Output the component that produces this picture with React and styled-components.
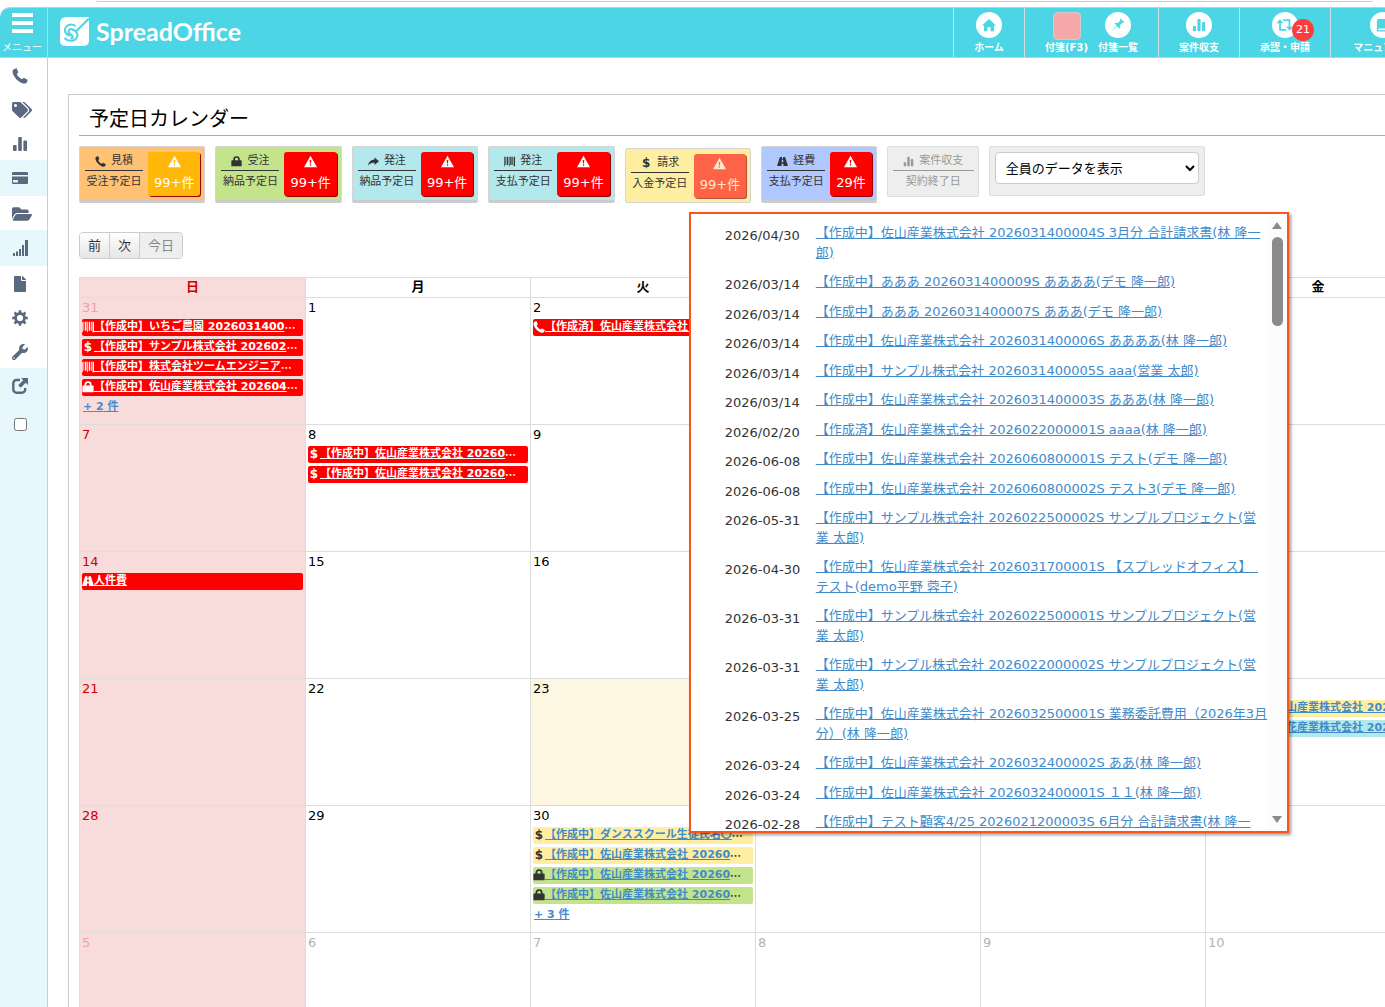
import { useState } from "react";
import styled, { createGlobalStyle, css } from "styled-components";
import { FaTags, FaFolderOpen, FaFile, FaWrench } from "react-icons/fa";

const FONT = `"DejaVu Sans", "Noto Sans CJK JP", sans-serif`;

/* ---------- icons ---------- */

const Phone = () => (
  <svg viewBox="0 0 16 16" width="1em" height="1em" fill="currentColor">
    <path d="M1.800 1.200L3.800.4c.5-.1.800 0 1 .4l1.400 3.100c.1.400 0 .7-.3 1L4.800 6C5.800 8.300 7.600 10.200 10 11.300l1.200-1.100c.3-.3.600-.3 1-.2l3 1.500c.400.2.500.500.4 1l-.8 1.900c-.7 1.300-2.600 1.500-4.500.8C6 13.600 2 9.400.8 5.200.3 3.300.7 1.800 1.800 1.200z" />
  </svg>
);

const Share = () => (
  <svg viewBox="0 0 16 16" width="1em" height="1em" fill="currentColor">
    <path d="M9.500 2L16 7.500 9.500 13V9.800C5.500 9.500 2.500 10.500 0 14 .8 8.500 4 5.500 9.500 5.200z" />
  </svg>
);

const Road = () => (
  <svg viewBox="0 0 16 16" width="1em" height="1em" fill="currentColor">
    <path d="M4.200 1.500h3V4h1.600V1.500h3L16 14.500H9.300v-3.300H6.700v3.300H0zM7 5.500L6.800 9h2.400L9 5.500z" fillRule="evenodd" />
  </svg>
);

const Stats = () => (
  <svg viewBox="0 0 16 16" width="1em" height="1em" fill="currentColor">
    <rect x="1" y="9" width="3.600" height="6" rx="1" />
    <rect x="6.200" y="1" width="3.600" height="14" rx="1" />
    <rect x="11.400" y="4.500" width="3.600" height="10.500" rx="1" />
  </svg>
);

const Card = () => (
  <svg viewBox="0 0 16 16" width="1em" height="1em" fill="currentColor">
    <path d="M0 3a1 1 0 0 1 1-1h14a1 1 0 0 1 1 1v2H0zM0 6.500h16V13a1 1 0 0 1-1 1H1a1 1 0 0 1-1-1zM1 10v2.500h5V10z" fillRule="evenodd" />
  </svg>
);

const Signal = () => (
  <svg viewBox="0 0 16 16" width="1em" height="1em" fill="currentColor">
    <path d="M1 13h2v3H1zM4 11.500h2V16H4zM7 9h2v7H7zM10 5h2v11h-2zM13 0h3v16h-3z" />
  </svg>
);

const Cog = () => (
  <svg viewBox="0 0 16 16" width="1em" height="1em" fill="none" stroke="currentColor">
    <circle cx="8" cy="8" r="4.500" strokeWidth="2.800" />
    <path
      d="M8 .2v2.800M8 13v2.800M.2 8h2.800M13 8h2.800M2.500 2.500l1.900 1.900M11.600 11.600l1.900 1.900M2.500 13.500l1.900-1.900M11.600 4.400l1.900-1.900"
      strokeWidth="2.600"
    />
  </svg>
);

const Export = () => (
  <svg viewBox="0 0 16 16" width="1em" height="1em">
    <path
      d="M8 2H4.500A3.200 3.200 0 0 0 1.300 5.200v6.300a3.200 3.200 0 0 0 3.200 3.200h5.500a3.200 3.200 0 0 0 3.200-3.200V10"
      fill="none"
      stroke="currentColor"
      strokeWidth="2.400"
    />
    <path d="M9 0h7v7l-2.300-2.300-5 5-2.500-2.500 5-5z" fill="currentColor" />
  </svg>
);

const Lock = () => (
  <svg viewBox="0 0 16 16" width="1em" height="1em">
    <path d="M4.500 8V4.500a3 3 0 0 1 3-3h1a3 3 0 0 1 3 3V8" fill="none" stroke="currentColor" strokeWidth="2.400" />
    <path d="M1.500 6h13a1 1 0 0 1 1 1v8H.5V7a1 1 0 0 1 1-1z" fill="currentColor" />
  </svg>
);

const Barcode = () => (
  <svg viewBox="0 0 16 16" width="1em" height="1em" fill="currentColor">
    <path d="M0 1h1v14H0zM2 1h1v12H2zM4 1h2v12H4zM7 1h1v14H7zM9 1h2v12H9zM12 1h1v12h-1zM14 1h2v14h-2z" />
  </svg>
);

const Warning = () => (
  <svg viewBox="0 0 16 16" width="1em" height="1em" fill="currentColor">
    <path d="M8 1l8 14H0zM7 6l.4 4.500h1.200L9 6zM7.200 11.500v1.600h1.600v-1.600z" fillRule="evenodd" />
  </svg>
);

const Home = () => (
  <svg viewBox="0 0 16 16" width="1em" height="1em" fill="currentColor">
    <path d="M8 1l8 7.500h-2.300V15H9.800v-4.500H6.200V15H2.300V8.500H0z" />
  </svg>
);

const Pin = () => (
  <svg viewBox="0 0 16 16" width="1em" height="1em" fill="currentColor">
    <path d="M11 .6L15.400 5l-1.100.8-1.200-.4-2.900 2.900.5 2.600-1 1-2.600-2.500L.8 15.200l5.700-6.500L4.100 6.300l1-1 2.600.5 2.900-2.900-.4-1.200z" />
  </svg>
);

const Retweet = () => (
  <svg viewBox="0 0 20 16" width="1.250em" height="1em" fill="currentColor">
    <path d="M4.500 1.500L8.500 6H5.600v6.500h5.400l1.700 2H3.600V6H.5zM15.500 14.500l-4-4.500h2.900V3.500H9l-1.700-2h9.100V10h3.100z" />
  </svg>
);

const Book = () => (
  <svg viewBox="0 0 16 16" width="1em" height="1em" fill="currentColor">
    <path d="M3 1h12v11H3.500a1 1 0 0 0 0 2H15v1.500H3A2 2 0 0 1 1 13V3a2 2 0 0 1 2-2z" />
  </svg>
);

const LogoMark = () => (
  <svg viewBox="0 0 29 29" width="29" height="29" aria-hidden="true">
    <path d="M6 0h23v24a5 5 0 0 1-5 5H5a5 5 0 0 1-5-5V6a6 6 0 0 1 6-6z" fill="#fff" />
    <path
      d="M29 1.500L17.500 13c-1.600 1.600-3 .8-4.200-.2-2-1.600-4.600-.6-4.800 1.600-.2 2.600 2.200 2.800 3.600 4.200 1.200 1.400.2 3-1.600 2.600"
      fill="none"
      stroke="#4cd5e5"
      strokeWidth="2.200"
    />
    <path
      d="M15.500 9C11 5.500 4.500 8.500 5 14c.4 3 2.500 3.500 5 5M4.500 21c4 4.500 11.500 3.500 12.800-2 .4-2-.3-3-1.300-4.500"
      fill="none"
      stroke="#4cd5e5"
      strokeWidth="2"
    />
  </svg>
);

const Dollar = () => <DollarSign>$</DollarSign>;

const icons = {
  phone: Phone,
  lock: Lock,
  share: Share,
  barcode: Barcode,
  dollar: Dollar,
  road: Road,
  stats: Stats,
};

/* ---------- data ---------- */

const sideItems = [
  { label: "見積", icon: Phone },
  { label: "受注", icon: FaTags, size: 20 },
  { label: "案件収支", icon: Stats },
  { label: "経費", icon: Card, active: true },
  { label: "ファイル", icon: FaFolderOpen, size: 20 },
  { label: "集計", icon: Signal, active: true },
  { label: "書類", icon: FaFile },
  { label: "設定", icon: Cog },
  { label: "ツール", icon: FaWrench },
];

const filters = [
  { icon: "phone", title: "見積", sub: "受注予定日", count: "99+件", bg: "#ffc174", alert: "#ffb70a" },
  { icon: "lock", title: "受注", sub: "納品予定日", count: "99+件", bg: "#c3e48b", alert: "#ff0000" },
  { icon: "share", title: "発注", sub: "納品予定日", count: "99+件", bg: "#b3e8ec", alert: "#ff0000" },
  { icon: "barcode", title: "発注", sub: "支払予定日", count: "99+件", bg: "#b3e8ec", alert: "#ff0000" },
  { icon: "dollar", title: "請求", sub: "入金予定日", count: "99+件", bg: "#feeea2", alert: "#ff6347", open: true },
  { icon: "road", title: "経費", sub: "支払予定日", count: "29件", bg: "#b0c8ff", alert: "#ff0000" },
  { icon: "stats", title: "案件収支", sub: "契約終了日", bg: "#eeeeee", off: true },
];

const invoices = [
  ["2026/04/30", "【作成中】佐山産業株式会社 2026031400004S 3月分 合計請求書(林 隆一郎)"],
  ["2026/03/14", "【作成中】あああ 2026031400009S ああああ(デモ 隆一郎)"],
  ["2026/03/14", "【作成中】あああ 2026031400007S あああ(デモ 隆一郎)"],
  ["2026/03/14", "【作成中】佐山産業株式会社 2026031400006S ああああ(林 隆一郎)"],
  ["2026/03/14", "【作成中】サンプル株式会社 2026031400005S aaa(営業 太郎)"],
  ["2026/03/14", "【作成中】佐山産業株式会社 2026031400003S あああ(林 隆一郎)"],
  ["2026/02/20", "【作成済】佐山産業株式会社 2026022000001S aaaa(林 隆一郎)"],
  ["2026-06-08", "【作成中】佐山産業株式会社 2026060800001S テスト(デモ 隆一郎)"],
  ["2026-06-08", "【作成中】佐山産業株式会社 2026060800002S テスト3(デモ 隆一郎)"],
  ["2026-05-31", "【作成中】サンプル株式会社 2026022500002S サンプルプロジェクト(営業 太郎)"],
  ["2026-04-30", "【作成中】佐山産業株式会社 2026031700001S 【スプレッドオフィス】　テスト(demo平野 蓉子)"],
  ["2026-03-31", "【作成中】サンプル株式会社 2026022500001S サンプルプロジェクト(営業 太郎)"],
  ["2026-03-31", "【作成中】サンプル株式会社 2026022000002S サンプルプロジェクト(営業 太郎)"],
  ["2026-03-25", "【作成中】佐山産業株式会社 2026032500001S 業務委託費用（2026年3月分）(林 隆一郎)"],
  ["2026-03-24", "【作成中】佐山産業株式会社 2026032400002S ああ(林 隆一郎)"],
  ["2026-03-24", "【作成中】佐山産業株式会社 2026032400001S １１(林 隆一郎)"],
  ["2026-02-28", "【作成中】テスト顧客4/25 2026021200003S 6月分 合計請求書(林 隆一郎)"],
];

const weekdays = ["日", "月", "火", "水", "木", "金", "土"];

const weeks = [
  [31, 1, 2, 3, 4, 5, 6],
  [7, 8, 9, 10, 11, 12, 13],
  [14, 15, 16, 17, 18, 19, 20],
  [21, 22, 23, 24, 25, 26, 27],
  [28, 29, 30, 1, 2, 3, 4],
  [5, 6, 7, 8, 9, 10, 11],
];

const TODAY = "3-2";

// keyed by "week-weekday"
const events = {
  "0-0": {
    items: [
      { icon: "barcode", text: "【作成中】いちご農園 2026031400", cut: true, late: true },
      { icon: "dollar", text: "【作成中】サンプル株式会社 202602", cut: true, late: true },
      { icon: "barcode", text: "【作成中】株式会社ツームエンジニア", cut: true, late: true },
      { icon: "lock", text: "【作成中】佐山産業株式会社 202604", cut: true, late: true },
    ],
    more: 2,
  },
  "0-2": {
    items: [{ icon: "phone", text: "【作成済】佐山産業株式会社 20260", cut: true, late: true }],
  },
  "1-1": {
    items: [
      { icon: "dollar", text: "【作成中】佐山産業株式会社 20260", cut: true, late: true },
      { icon: "dollar", text: "【作成中】佐山産業株式会社 20260", cut: true, late: true },
    ],
  },
  "2-0": { items: [{ icon: "road", text: "人件費", late: true }] },
  "3-5": {
    items: [
      { icon: "dollar", text: "【作成中】佐山産業株式会社 20260", cut: true, bg: "#feeea2" },
      { icon: "barcode", text: "【作成中】立花産業株式会社 20260", cut: true, bg: "#b3e8ec" },
    ],
  },
  "4-2": {
    items: [
      { icon: "dollar", text: "【作成中】ダンススクール生徒氏名〇", cut: true, bg: "#feeea2" },
      { icon: "dollar", text: "【作成中】佐山産業株式会社 20260", cut: true, bg: "#feeea2" },
      { icon: "lock", text: "【作成中】佐山産業株式会社 20260", cut: true, bg: "#c3e48b" },
      { icon: "lock", text: "【作成中】佐山産業株式会社 20260", cut: true, bg: "#c3e48b" },
    ],
    more: 3,
  },
};

const isOtherMonth = (week, day) => (week === 0 && day > 20) || (week > 3 && day < 15);

/* ---------- page ---------- */

const App = () => {
  const [owner, setOwner] = useState("all");
  const [pinned, setPinned] = useState(false);

  return (
    <>
      <GlobalStyle />
      <Page>
        <TopEdge />
        <Header>
          <MenuButton type="button">
            <Bars>
              <i />
              <i />
              <i />
            </Bars>
            メニュー
          </MenuButton>
          <Brand href="#">
            <LogoMark />
            <BrandName>SpreadOffice</BrandName>
          </Brand>
          <Nav>
            <NavCell $w={70}>
              <NavLink href="#">
                <Round><Home /></Round>
                ホーム
              </NavLink>
            </NavCell>
            <NavCell $w={133}>
              <NavLink href="#">
                <Sticky />
                付箋(F3)
              </NavLink>
              <NavLink href="#">
                <Round><Pin /></Round>
                付箋一覧
              </NavLink>
            </NavCell>
            <NavCell $w={80}>
              <NavLink href="#">
                <Round><Stats /></Round>
                案件収支
              </NavLink>
            </NavCell>
            <NavCell $w={90}>
              <NavLink href="#">
                <Round><Retweet /></Round>
                承認・申請
                <Badge>21</Badge>
              </NavLink>
            </NavCell>
            <NavCell $w={104}>
              <NavLink href="#">
                <Round><Book /></Round>
                マニュアル等
              </NavLink>
            </NavCell>
          </Nav>
        </Header>

        <Body>
          <Sidebar>
            {sideItems.map(({ label, icon: Icon, size, active }) => (
              <SideLink key={label} href="#" aria-label={label} $active={active} $size={size}>
                <Icon />
              </SideLink>
            ))}
            <SideBottom>
              <SideLink href="#" aria-label="外部リンク" $active>
                <Export />
              </SideLink>
              <SideCheck
                type="checkbox"
                aria-label="メニューを固定"
                checked={pinned}
                onChange={(e) => setPinned(e.target.checked)}
              />
            </SideBottom>
          </Sidebar>

          <Panel>
            <Title>予定日カレンダー</Title>
            <Filters>
              {filters.map((f) => {
                const Icon = icons[f.icon];
                return (
                  <FilterWrap key={f.title + f.sub}>
                    <FilterButton type="button" $bg={f.bg} $open={f.open} $off={f.off}>
                      <FilterText $off={f.off}>
                        <span>
                          <Icon />
                          {f.title}
                        </span>
                        <span>{f.sub}</span>
                      </FilterText>
                      {f.count && (
                        <Alert $bg={f.alert} $open={f.open}>
                          <Warning />
                          {f.count}
                        </Alert>
                      )}
                    </FilterButton>
                    {f.open && (
                      <Popup>
                        <List>
                          {invoices.map(([date, text]) => (
                            <li key={text}>
                              <time>{date}</time>
                              <span>
                                <a href="#">{text}</a>
                              </span>
                            </li>
                          ))}
                        </List>
                        <ScrollBar aria-hidden="true">
                          <Arrow />
                          <Thumb />
                          <Arrow $down />
                        </ScrollBar>
                      </Popup>
                    )}
                  </FilterWrap>
                );
              })}
              <OwnerBox>
                <select
                  aria-label="表示するデータ"
                  value={owner}
                  onChange={(e) => setOwner(e.target.value)}
                >
                  <option value="all">全員のデータを表示</option>
                  <option value="me">自分のデータを表示</option>
                </select>
              </OwnerBox>
            </Filters>

            <Pager>
              <button type="button">前</button>
              <button type="button">次</button>
              <button type="button" disabled>今日</button>
            </Pager>

            <Calendar>
              <thead>
                <tr>
                  {weekdays.map((d) => (
                    <th key={d} scope="col">{d}</th>
                  ))}
                </tr>
              </thead>
              <tbody>
                {weeks.map((week, w) => (
                  <tr key={w}>
                    {week.map((day, d) => {
                      const key = `${w}-${d}`;
                      const cell = events[key];
                      return (
                        <Day key={key} $today={key === TODAY}>
                          <DayNumber $sunday={d === 0} $other={isOtherMonth(w, day)}>
                            {day}
                          </DayNumber>
                          {cell?.items.map((item, i) => {
                            const Icon = icons[item.icon];
                            return (
                              <Event key={i} $late={item.late} $bg={item.bg}>
                                <EventIcon><Icon /></EventIcon>
                                <a href="#">{item.text}</a>
                                {item.cut && <Dots>…</Dots>}
                              </Event>
                            );
                          })}
                          {cell?.more && <More href="#">+ {cell.more} 件</More>}
                        </Day>
                      );
                    })}
                  </tr>
                ))}
              </tbody>
            </Calendar>
          </Panel>
        </Body>
      </Page>
    </>
  );
};

export default App;

const GlobalStyle = createGlobalStyle`
  * {
    box-sizing: border-box;
  }
  body {
    margin: 0;
    background: #fff;
    color: #333;
    font-family: ${FONT};
    font-size: 13px;
    line-height: 1.5;
  }
  button, select, input {
    font: inherit;
    color: inherit;
    margin: 0;
  }
  a {
    color: #428bca;
  }
`;

const Page = styled.div`
  display: flex;
  flex-direction: column;
  height: 100vh;
  overflow: hidden;
`;

const TopEdge = styled.div`
  flex: none;
  height: 2px;
  margin: 0 12px 5px 96px;
  border-bottom: 1px solid #ccc;
  border-radius: 0 0 8px 8px;
`;

const Header = styled.header`
  flex: none;
  display: flex;
  min-width: 1435px;
  height: 51px;
  background: #4cd5e5;
  border-top: 1px solid #ccc;
  border-bottom: 1px solid #ccc;
  border-radius: 10px 0 0 0;
`;

const MenuButton = styled.button`
  display: flex;
  flex-direction: column;
  align-items: center;
  gap: 7px;
  width: 48px;
  padding: 5px 3px 0 0;
  border: 0;
  border-right: 1px solid #ccc;
  background: none;
  color: #fff;
  font-size: 10px;
  line-height: 16px;
  white-space: nowrap;
`;

const Bars = styled.span`
  display: flex;
  flex-direction: column;
  gap: 4px;

  i {
    width: 21px;
    height: 4px;
    background: #fff;
  }
`;

const Brand = styled.a`
  display: flex;
  align-items: center;
  gap: 7px;
  margin-left: 12px;
  padding-bottom: 3px;
  color: #fff;
  text-decoration: none;
`;

const BrandName = styled.span`
  font-family: Lato, sans-serif;
  font-size: 25px;
  font-weight: 700;
  line-height: 28px;
`;

const Nav = styled.nav`
  display: flex;
  margin-left: auto;
`;

const NavCell = styled.div`
  display: flex;
  justify-content: center;
  gap: 10px;
  width: ${(p) => p.$w + 1}px;
  border-left: 1px solid #d5dde0;
`;

const NavLink = styled.a`
  position: relative;
  display: flex;
  flex-direction: column;
  align-items: center;
  padding-top: 4px;
  color: #fff;
  font-size: 10px;
  font-weight: bold;
  line-height: 16px;
  text-decoration: none;
  white-space: nowrap;
`;

const Round = styled.span`
  display: flex;
  align-items: center;
  justify-content: center;
  width: 26px;
  height: 26px;
  margin-bottom: 2px;
  border-radius: 50%;
  background: #fff;
  color: #4cd5e5;
  font-size: 14px;
`;

const Sticky = styled.span`
  width: 28px;
  height: 28px;
  border: 1px solid #ccc;
  border-radius: 4px;
  background: #f5a9a9;
`;

const Badge = styled.span`
  position: absolute;
  top: 11px;
  right: -4px;
  width: 22px;
  height: 22px;
  border-radius: 50%;
  background: #ff3c3c;
  font-size: 11px;
  font-weight: normal;
  line-height: 22px;
  text-align: center;
`;

const Body = styled.div`
  flex: 1;
  display: flex;
  min-height: 0;
`;

const Sidebar = styled.nav`
  flex: none;
  display: flex;
  flex-direction: column;
  width: 48px;
  border-right: 1px solid #ccc;
`;

const SideLink = styled.a`
  flex: none;
  display: flex;
  align-items: center;
  height: ${(p) => (p.$active ? 36 : 34)}px;
  padding: ${(p) => (p.$active ? 0 : 2)}px 0 0 12px;
  background: ${(p) => (p.$active ? "#e8f7fb" : "#fff")};
  color: #5a6880;
  font-size: ${(p) => p.$size || 16}px;
`;

const SideBottom = styled.div`
  flex: 1;
  background: #e8f7fb;
`;

const SideCheck = styled.input`
  display: block;
  width: 13px;
  height: 13px;
  && {
    margin: 14px 0 0 14px;
  }
`;

const Panel = styled.main`
  flex: 1;
  min-width: 0;
  margin: 36px 0 0 20px;
  padding: 0 0 0 10px;
  border: solid #ccc;
  border-width: 1px 0 0 1px;
`;

const Title = styled.h1`
  margin: 0;
  padding: 8px 10px 0;
  border-bottom: 1px solid #aaa;
  color: #000;
  font-size: 20px;
  font-weight: normal;
  line-height: 32px;
`;

const Filters = styled.div`
  display: flex;
  align-items: flex-start;
  gap: 10px;
  height: 57px;
  margin-top: 10px;
`;

const FilterWrap = styled.div`
  position: relative;
  flex: none;
`;

const FilterButton = styled.button`
  display: flex;
  align-items: flex-start;
  gap: 5px;
  padding: 5px 4px 3px 5px;
  border: 1px solid #d5d5d5;
  border-bottom: 3px solid #ccc;
  border-radius: 2px;
  background: ${(p) => p.$bg};
  color: #333;
  height: 57px;

  ${(p) =>
    p.$open &&
    css`
      height: 55px;
      margin-top: 2px;
      border-bottom: 1px solid #d5d5d5;
    `}
  ${(p) =>
    p.$off &&
    css`
      height: 51px;
      border: 1px solid #ddd;
      color: #999;
    `}
`;

const FilterText = styled.span`
  width: ${(p) => (p.$off ? 81 : 58)}px;
  font-size: 11px;
  text-align: center;
  white-space: nowrap;

  span {
    display: block;
    line-height: 21px;
  }
  > span:first-child {
    display: flex;
    align-items: center;
    justify-content: center;
    gap: 5px;
    line-height: 18px;
    border-bottom: 1px solid currentColor;
  }
`;

const DollarSign = styled.b`
  width: 12px;
  font-size: 12px;
  text-align: center;
`;

const Alert = styled.span`
  display: flex;
  flex-direction: column;
  align-items: center;
  height: 44px;
  padding: 3px 6px 0;
  border-radius: 3px;
  background: ${(p) => p.$bg};
  box-shadow: 1px 1px 0 ${(p) => (p.$open ? "#b5523a" : "#900")};
  color: ${(p) => (p.$open ? "#ffe9c8" : "#fff")};
  line-height: 29px;

  svg {
    flex: none;
  }
`;

const OwnerBox = styled.div`
  padding: 5px;
  border: 1px solid #ddd;
  border-radius: 2px;
  background: #eee;
  height: 50px;

  select {
    width: 204px;
    height: 32px;
    padding: 0 6px;
    border: 1px solid #ccc;
    border-radius: 4px;
    background: #fff;
    color: #000;
  }
`;

const Popup = styled.div`
  position: absolute;
  z-index: 2;
  top: 66px;
  left: 64px;
  display: flex;
  width: 600px;
  height: 621px;
  overflow: hidden;
  border: 2px solid #fa5519;
  background: #fff;
  box-shadow: 2px 2px 3px rgba(0, 0, 0, 0.4);
`;

const List = styled.ul`
  flex: 1;
  margin: 0;
  padding: 9px 0 0 34px;
  list-style: none;

  li {
    display: grid;
    grid-template-columns: 91px 1fr;
    padding-bottom: 10px;
  }
  time {
    padding-top: 3px;
    margin-bottom: -3px;
  }
`;

const ScrollBar = styled.div`
  display: flex;
  flex-direction: column;
  align-items: center;
  width: 19px;
  padding: 8px 0;
  background: #fcfcfc;
`;

const Arrow = styled.span`
  margin-top: ${(p) => (p.$down ? "auto" : 0)};
  border: solid transparent;
  border-width: ${(p) => (p.$down ? "7px 5px 0" : "0 5px 7px")};
  border-top-color: ${(p) => (p.$down ? "#8b8b8b" : "transparent")};
  border-bottom-color: ${(p) => (p.$down ? "transparent" : "#8b8b8b")};
`;

const Thumb = styled.span`
  width: 11px;
  height: 89px;
  margin-top: 8px;
  border-radius: 6px;
  background: #8b8b8b;
`;

const Pager = styled.div`
  display: inline-flex;
  margin: 29px 0 18px;
  border: 1px solid #ccc;
  border-radius: 4px;
  overflow: hidden;
  vertical-align: top;

  button {
    height: 25px;
    padding: 0 8px;
    border: 0;
    border-right: 1px solid #ccc;
    background: linear-gradient(#fff, #e6e6e6);
    line-height: 23px;
  }
  button:last-child {
    border-right: 0;
    background: #eee;
    color: #888;
  }
`;

const Calendar = styled.table`
  width: 100%;
  min-width: 1577px;
  border-collapse: collapse;
  table-layout: fixed;
  color: #000;

  th,
  td {
    border: 1px solid #ddd;
    padding: 0 2px;
  }
  th {
    height: 20px;
    padding-bottom: 2px;
    line-height: 17px;
  }
  td {
    height: 127px;
    vertical-align: top;
  }
  th:first-child,
  td:first-child {
    background: #f8dbdb;
  }
  th:first-child {
    width: 226px;
    color: #c00;
  }
`;

const Day = styled.td`
  background: ${(p) => (p.$today ? "#fdf7e2" : "#fff")};
`;

const DayNumber = styled.div`
  height: 21px;
  line-height: 20px;
  color: ${(p) => {
    if (p.$sunday) return p.$other ? "#e9a3a3" : "#c00";
    return p.$other ? "#b3b3b3" : "#000";
  }};
`;

const Event = styled.div`
  display: flex;
  align-items: flex-start;
  height: 17px;
  margin-bottom: 3px;
  overflow: hidden;
  border-radius: 2px;
  background: ${(p) => (p.$late ? "#ff0000" : p.$bg)};
  color: ${(p) => (p.$late ? "#fff" : "#333")};
  font-size: 11px;
  font-weight: bold;
  line-height: 16px;
  white-space: nowrap;

  a {
    color: ${(p) => (p.$late ? "#fff" : "#428bca")};
  }
`;

const EventIcon = styled.span`
  flex: none;
  display: flex;
  align-items: center;
  justify-content: center;
  width: 12px;
  height: 16px;
  font-size: 12px;
`;

const Dots = styled.span`
  font-family: "Noto Sans CJK JP", sans-serif;
`;

const More = styled.a`
  display: block;
  width: fit-content;
  margin-left: 1px;
  font-size: 11px;
  font-weight: bold;
  line-height: 16px;
`;
